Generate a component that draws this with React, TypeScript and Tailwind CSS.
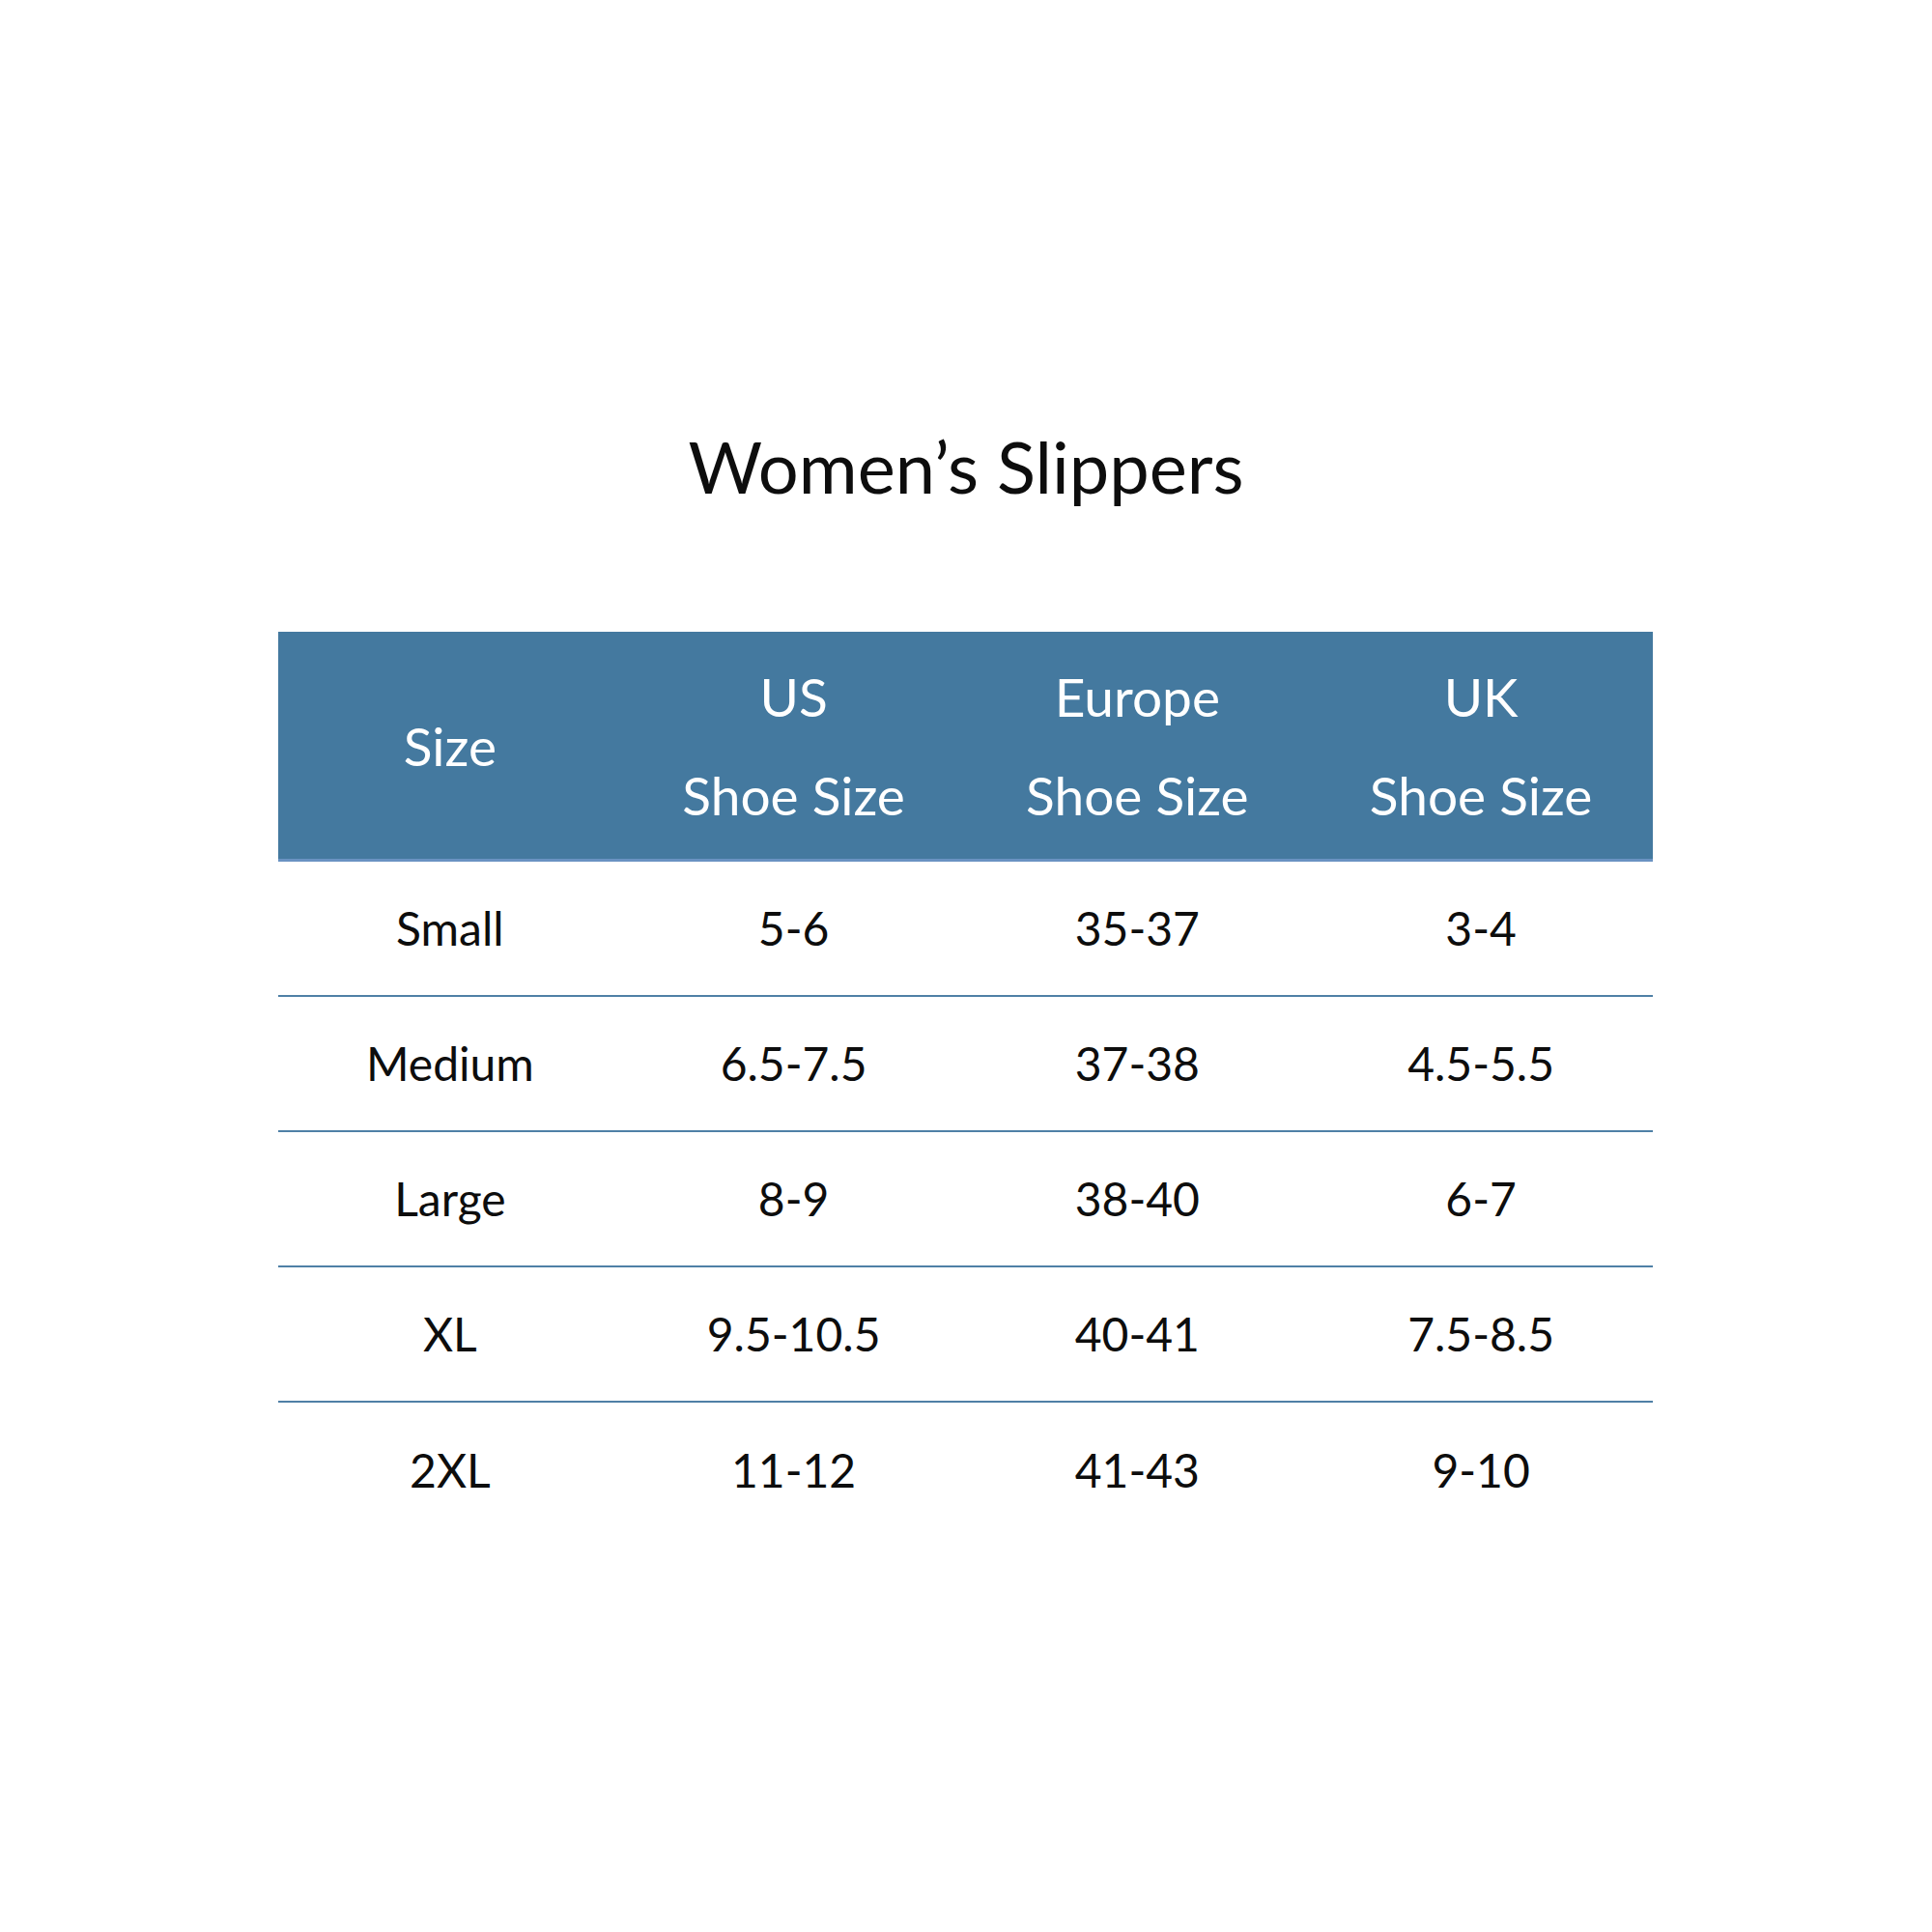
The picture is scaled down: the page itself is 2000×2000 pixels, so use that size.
export default function App() {
  const rows = [
    ["Small", "5-6", "35-37", "3-4"],
    ["Medium", "6.5-7.5", "37-38", "4.5-5.5"],
    ["Large", "8-9", "38-40", "6-7"],
    ["XL", "9.5-10.5", "40-41", "7.5-8.5"],
    ["2XL", "11-12", "41-43", "9-10"],
  ];
  return (
    <div className="w-[2000px] h-[2000px] bg-white flex flex-col items-center pt-[433px] font-['Lato',sans-serif] text-[#0d0d0d]">
      <div className="text-[74px] leading-[100px] h-[100px]">Women’s Slippers</div>
      <div className="mt-[121px] w-[1423px] ml-[-1px]">
        <div className="grid grid-cols-4 h-[238px] bg-[#44799f] border-b-[3px] border-[#6a92c2] text-white text-[55px] leading-[102px] items-center text-center">
          <div>Size</div>
          <div>US<br />Shoe Size</div>
          <div>Europe<br />Shoe Size</div>
          <div>UK<br />Shoe Size</div>
        </div>
        {rows.map((r, i) => (
          <div
            key={i}
            className={`grid grid-cols-4 h-[140px] items-center text-center text-[48px] ${i < rows.length - 1 ? "border-b-2 border-[#4f80a6]" : ""}`}
          >
            {r.map((c, j) => (
              <div key={j}>{c}</div>
            ))}
          </div>
        ))}
      </div>
    </div>
  );
}
